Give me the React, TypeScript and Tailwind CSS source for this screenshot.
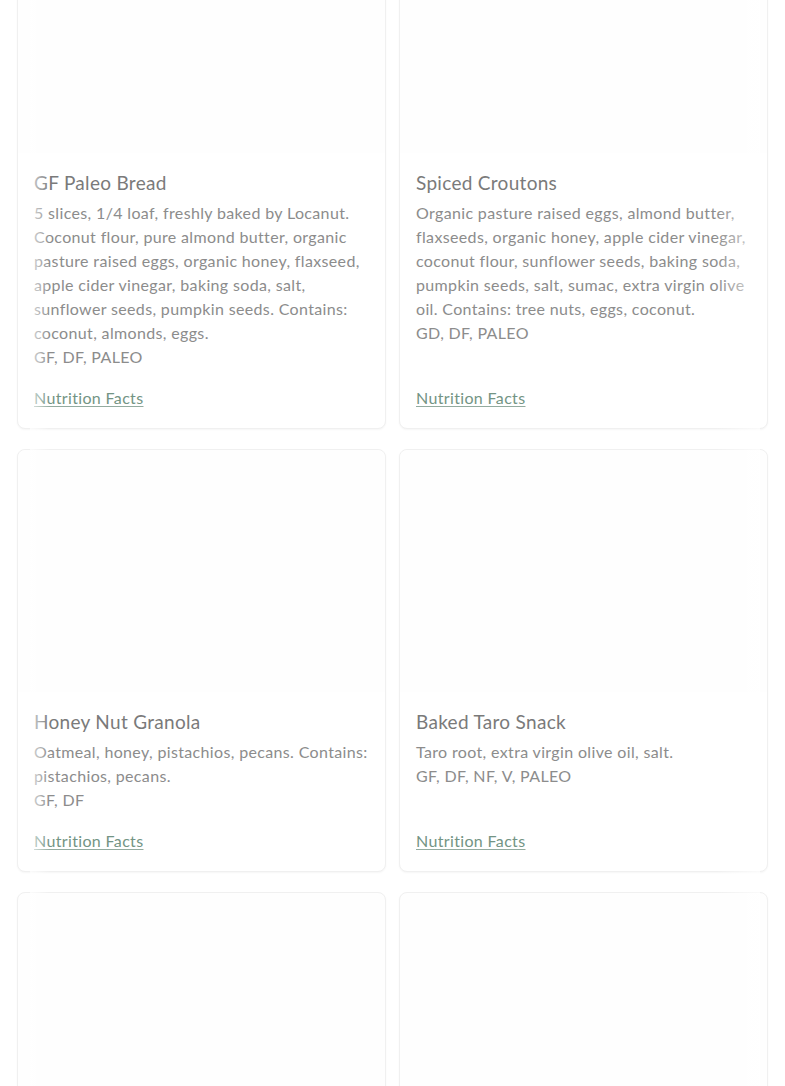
import React from 'react'

type Item = {
  title: string
  desc: string
  tags: string
}

const items: Item[] = [
  {
    title: 'GF Paleo Bread',
    desc: '5 slices, 1/4 loaf, freshly baked by Locanut. Coconut flour, pure almond butter, organic pasture raised eggs, organic honey, flaxseed, apple cider vinegar, baking soda, salt, sunflower seeds, pumpkin seeds. Contains: coconut, almonds, eggs.',
    tags: 'GF, DF, PALEO',
  },
  {
    title: 'Spiced Croutons',
    desc: 'Organic pasture raised eggs, almond butter, flaxseeds, organic honey, apple cider vinegar, coconut flour, sunflower seeds, baking soda, pumpkin seeds, salt, sumac, extra virgin olive oil. Contains: tree nuts, eggs, coconut.',
    tags: 'GD, DF, PALEO',
  },
  {
    title: 'Honey Nut Granola',
    desc: 'Oatmeal, honey, pistachios, pecans. Contains: pistachios, pecans.',
    tags: 'GF, DF',
  },
  {
    title: 'Baked Taro Snack',
    desc: 'Taro root, extra virgin olive oil, salt.',
    tags: 'GF, DF, NF, V, PALEO',
  },
]

function Card({ item }: { item: Item }) {
  return (
    <div className="flex flex-col rounded-lg border border-[#f0f0f0] bg-white shadow-[0_1px_2px_rgba(0,0,0,0.04)]">
      <div className="h-[242px] rounded-t-lg bg-[#fefefe]" />
      <div className="flex flex-1 flex-col pt-4 pr-3 pb-[18px] pl-4">
        <h3 className="text-[19px] leading-7 tracking-[0.3px] text-[#7a7a7a]">{item.title}</h3>
        <p className="mt-[4px] text-[16px] leading-6 tracking-[0.35px] text-[#8c8c8c]">{item.desc}</p>
        <p className="text-[16px] leading-6 tracking-[0.35px] text-[#8c8c8c]">{item.tags}</p>
        <a
          href="#"
          className="mt-auto pt-[17px] text-[16px] leading-6 tracking-[0.35px] text-[#739484] underline decoration-[#93ab9f] underline-offset-2"
        >
          Nutrition Facts
        </a>
      </div>
    </div>
  )
}

function EmptyCard() {
  return (
    <div className="h-[300px] rounded-lg border border-[#f0f0f0] bg-[#fefefe] shadow-[0_1px_2px_rgba(0,0,0,0.04)]" />
  )
}

export default function App() {
  return (
    <div className="h-[1086px] overflow-hidden bg-white font-['Lato',sans-serif]">
      <div className="relative -mt-[90px] grid grid-cols-2 gap-x-[13px] gap-y-[20px] px-[17px]">
        {items.map((item, i) => (
          <Card key={i} item={item} />
        ))}
        <EmptyCard />
        <EmptyCard />
        <div className="pointer-events-none absolute top-0 bottom-0 left-[30px] w-[20px] bg-gradient-to-r from-white/70 to-transparent" />
        <div className="pointer-events-none absolute top-0 bottom-0 left-[715px] w-[45px] bg-gradient-to-r from-transparent to-white/70" />
      </div>
    </div>
  )
}
